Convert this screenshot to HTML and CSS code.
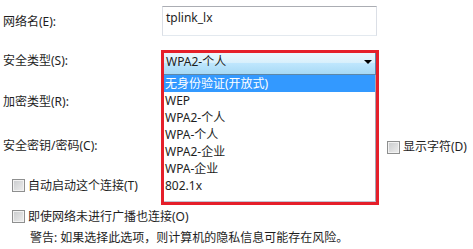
FILE: index.html
```html
<!DOCTYPE html>
<html>
<head>
	<title>无线网络属性</title>
	<meta charset="utf-8">
	<link rel="stylesheet" href="styles.css">
</head>
<body>
	<div class="dialog">
		<div class="row row-name">
			<label class="label">网络名(E):</label>
			<div class="textbox">tplink_lx</div>
		</div>

		<div class="row row-sec">
			<label class="label">安全类型(S):</label>
			<div class="combo open">
				<div class="combo-head">WPA2-个人<i class="arrow"></i></div>
				<ul class="combo-menu">
					<li class="selected">无身份验证(开放式)</li>
					<li>WEP</li>
					<li>WPA2-个人</li>
					<li>WPA-个人</li>
					<li>WPA2-企业</li>
					<li>WPA-企业</li>
					<li>802.1x</li>
				</ul>
			</div>
		</div>

		<div class="row row-enc">
			<label class="label">加密类型(R):</label>
			<div class="combo"><div class="combo-head"><i class="arrow"></i></div></div>
		</div>

		<div class="row row-key">
			<label class="label">安全密钥/密码(C):</label>
			<div class="textbox"></div>
			<label class="check show"><span class="box"></span>显示字符(D)</label>
		</div>

		<label class="check auto"><span class="box"></span>自动启动这个连接(T)</label>
		<label class="check bcast"><span class="box"></span>即使网络未进行广播也连接(O)</label>
		<p class="warn">警告: 如果选择此选项，则计算机的隐私信息可能存在风险。</p>
	</div>
</body>
</html>
```

FILE: styles.css
```css
*{
	padding: 0;
	margin: 0;
	box-sizing: border-box;
}
body{
	font-family: "Noto Sans", "Noto Sans CJK SC", sans-serif;
	font-size: 12px;
	color: #1e1e1e;
	background-color: #fff;
}
.row{
	display: flex;
	align-items: flex-start;
}
.label{
	width: 159px;
	padding-left: 3px;
	line-height: 16px;
}
.textbox{
	width: 215px;
	height: 30px;
	margin-left: 3px;
	padding: 3px 3px;
	line-height: 16px;
	border: 1px solid #dbdfe6;
	border-top-color: #abadb3;
	border-bottom-color: #e3e9ef;
}

.row-name{
	height: 42px;
}
.row-name .label{
	margin-top: 14px;
}
.row-name .textbox{
	margin-top: 6px;
}

.row-sec{
	height: 40px;
}
.row-sec .label{
	margin-top: 11px;
}
.combo{
	position: relative;
	width: 212px;
	height: 22px;
	margin-left: 5px;
}
.row-sec .combo{
	margin-top: 11px;
}
.combo-head{
	height: 22px;
	padding-left: 2px;
	line-height: 18px;
	background: linear-gradient(#eaf6fd, #d9f0fc 45%, #bee6fd 50%, #a7d9f5);
	border-right: 1px solid #5d87a8;
	border-bottom: 1px solid #5d87a8;
}
.arrow{
	position: absolute;
	top: 7px;
	right: 4px;
	width: 0;
	height: 0;
	border-left: 4px solid transparent;
	border-right: 4px solid transparent;
	border-top: 4px solid #000;
}
.combo-menu{
	position: absolute;
	top: 22px;
	left: 0;
	width: 100%;
	padding-bottom: 7px;
	list-style: none;
	background-color: #fff;
	border-right: 1px solid #a5a5b4;
	border-bottom: 1px solid #c4c4d2;
	z-index: 2;
}
.combo-menu li{
	height: 17px;
	line-height: 17px;
	padding-left: 1px;
}
.combo-menu .selected{
	background-color: #3399ff;
	color: #fff;
}
/* red highlight round the open list */
.open::after{
	content: "";
	box-sizing: border-box;
	position: absolute;
	top: -3px;
	left: -3px;
	right: -3px;
	height: 155px;
	border: 3px solid #e51f2a;
	z-index: 3;
}

.row-enc{
	height: 42px;
}
.row-enc .label{
	margin-top: 12px;
}
.row-enc .combo{
	margin-top: 10px;
}

.row-key{
	height: 46px;
}
.row-key .label{
	margin-top: 14px;
}
.row-key .textbox{
	margin-top: 8px;
}

.check{
	display: flex;
	align-items: center;
	gap: 3px;
	line-height: 16px;
}
.box{
	width: 13px;
	height: 13px;
	border: 1px solid #8e8f8f;
	background: linear-gradient(135deg, #c9cbcd, #eeeeee);
	box-shadow: inset 0 0 0 1px #f2f2f2;
}
.show{
	margin: 15px 0 0 10px;
}
.auto, .bcast{
	height: 31px;
	padding-left: 12px;
}
.warn{
	padding-left: 30px;
	line-height: 14px;
	margin-top: -1px;
}
```
